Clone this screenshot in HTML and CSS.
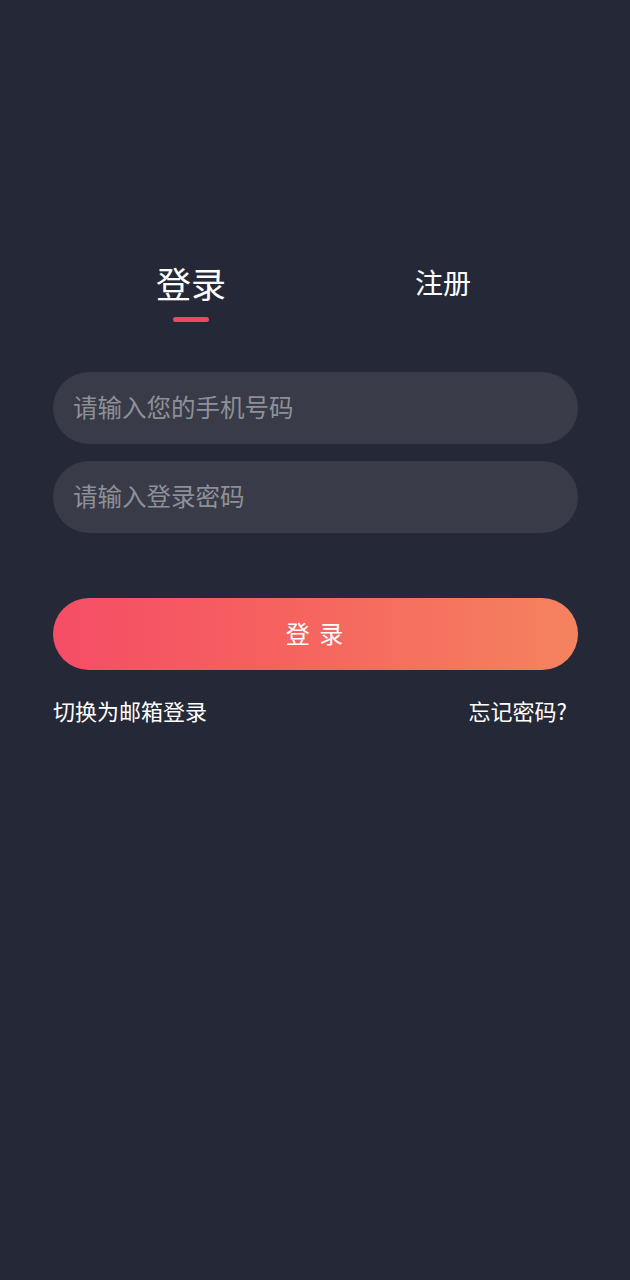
FILE: index.html
```html
<!DOCTYPE html>
<html lang="zh-CN">
<head>
<meta charset="utf-8">
<title>登录</title>
<link rel="stylesheet" href="styles.css">
</head>
<body>
<div class="page">
  <div class="tabs">
    <div class="tab tab-active">
      <span class="tab-label">登录</span>
      <span class="tab-bar"></span>
    </div>
    <div class="tab">
      <span class="tab-label small">注册</span>
    </div>
  </div>
  <form class="form">
    <div class="field"><input class="input" type="text" placeholder="请输入您的手机号码"></div>
    <div class="field"><input class="input" type="password" placeholder="请输入登录密码"></div>
    <button class="submit" type="button">登 录</button>
    <div class="links">
      <a class="link">切换为邮箱登录</a>
      <a class="link">忘记密码?</a>
    </div>
  </form>
</div>
</body>
</html>
```
FILE: styles.css
```css
html, body {
  margin: 0;
  padding: 0;
  background: #252937;
  height: 100%;
}
body {
  font-family: "Noto Sans CJK SC", "Noto Sans", sans-serif;
  color: #ffffff;
}
.page {
  padding: 264px 52px 0 53px;
  box-sizing: border-box;
  min-height: 1280px;
}
.tabs {
  display: flex;
  justify-content: center;
  gap: 189px;
  padding-right: 4px;
}
.tab {
  display: flex;
  flex-direction: column;
  align-items: center;
}
.tab-label {
  font-size: 35px;
  line-height: 38px;
  height: 38px;
}
.tab-label.small {
  font-size: 28px;
  line-height: 36px;
}
.tab-bar {
  margin-top: 15px;
  width: 36px;
  height: 5px;
  border-radius: 3px;
  background: #ec4862;
}
.form {
  margin-top: 50px;
  display: flex;
  flex-direction: column;
}
.field {
  height: 72px;
  box-sizing: border-box;
  border-radius: 36px;
  background: #393c48;
  display: flex;
  align-items: center;
  padding: 0 20px 3px;
  margin-bottom: 17px;
}
.input {
  flex: 1;
  background: transparent;
  border: none;
  outline: none;
  color: #ffffff;
  font-family: "Noto Sans CJK SC", sans-serif;
  font-size: 24.5px;
  padding: 0;
}
.input::placeholder {
  color: #8e9098;
}
.submit {
  margin-top: 48px;
  height: 72px;
  border: none;
  border-radius: 36px;
  padding: 0 0 4px;
  background: linear-gradient(90deg, #f54d66 0%, #f6605f 40%, #f5835f 100%);
  color: #ffffff;
  font-family: "Noto Sans CJK SC", sans-serif;
  font-size: 24px;
  letter-spacing: 2px;
}
.links {
  display: flex;
  justify-content: space-between;
  margin-top: 25px;
  padding-right: 11px;
}
.link {
  font-size: 22px;
  line-height: 30px;
  color: #ffffff;
}
```
